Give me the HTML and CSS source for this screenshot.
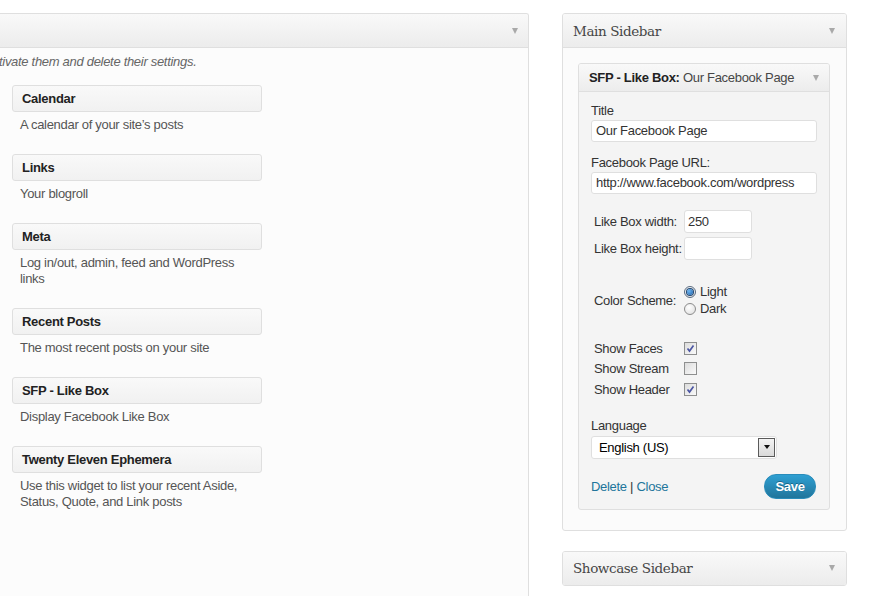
FILE: index.html
```html
<!DOCTYPE html>
<html lang="en">
<head>
<meta charset="utf-8">
<title>Widgets</title>
<link rel="stylesheet" href="styles.css">
</head>
<body>
<div class="page">
  <section class="available">
    <div class="panel-head"><span class="arrow"></span></div>
    <div class="available-body">
      <p class="hint"><span class="hint-cut"><span>Drag widgets back here to deac</span></span>tivate them and delete their settings.</p>
      <ul class="widget-list">
        <li class="widget-item"><div class="widget-top">Calendar</div><p class="widget-desc">A calendar of your site’s posts</p></li>
        <li class="widget-item"><div class="widget-top">Links</div><p class="widget-desc">Your blogroll</p></li>
        <li class="widget-item"><div class="widget-top">Meta</div><p class="widget-desc">Log in/out, admin, feed and WordPress links</p></li>
        <li class="widget-item"><div class="widget-top">Recent Posts</div><p class="widget-desc">The most recent posts on your site</p></li>
        <li class="widget-item"><div class="widget-top">SFP - Like Box</div><p class="widget-desc">Display Facebook Like Box</p></li>
        <li class="widget-item"><div class="widget-top">Twenty Eleven Ephemera</div><p class="widget-desc">Use this widget to list your recent Aside, Status, Quote, and Link posts</p></li>
      </ul>
    </div>
  </section>

  <aside class="sidebars">
    <section class="sidebar">
      <div class="panel-head"><h3 class="sidebar-title">Main Sidebar</h3><span class="arrow"></span></div>
      <div class="sidebar-body">
        <div class="widget">
          <div class="widget-head"><h4 class="widget-title"><b>SFP - Like Box:</b> Our Facebook Page</h4><span class="arrow"></span></div>
          <form class="widget-form">
            <label class="field-label first">Title</label>
            <div class="text-input">Our Facebook Page</div>
            <label class="field-label">Facebook Page URL:</label>
            <div class="text-input">http://www.facebook.com/wordpress</div>

            <div class="size-rows">
              <span class="row-label">Like Box width:</span><div class="small-input">250</div>
              <span class="row-label">Like Box height:</span><div class="small-input"></div>
            </div>

            <div class="scheme-row">
              <span class="row-label">Color Scheme:</span>
              <div class="radio-group">
                <div class="radio-line"><span class="radio checked"></span>Light</div>
                <div class="radio-line"><span class="radio"></span>Dark</div>
              </div>
            </div>

            <div class="check-rows">
              <span class="row-label">Show Faces</span><span class="checkbox checked"><svg viewBox="0 0 11 11" width="11" height="11"><path d="M2.5 5.5 L4.5 8 L8.5 2.5" fill="none" stroke="#4c56a3" stroke-width="1.7"/></svg></span>
              <span class="row-label">Show Stream</span><span class="checkbox"></span>
              <span class="row-label">Show Header</span><span class="checkbox checked"><svg viewBox="0 0 11 11" width="11" height="11"><path d="M2.5 5.5 L4.5 8 L8.5 2.5" fill="none" stroke="#4c56a3" stroke-width="1.7"/></svg></span>
            </div>

            <label class="field-label lang">Language</label>
            <div class="select">English (US)<span class="select-btn"></span></div>

            <div class="widget-actions">
              <div class="links"><a class="link">Delete</a> | <a class="link">Close</a></div>
              <span class="save">Save</span>
            </div>
          </form>
        </div>
      </div>
    </section>

    <section class="sidebar closed">
      <div class="panel-head"><h3 class="sidebar-title">Showcase Sidebar</h3><span class="arrow"></span></div>
    </section>
  </aside>
</div>
</body>
</html>
```

FILE: styles.css
```css
* { box-sizing: border-box; }
html, body { margin: 0; background: #fff; }
body {
  font-family: "Liberation Sans", Arial, sans-serif;
  font-size: 13px;
  letter-spacing: -0.3px;
  color: #333;
  height: 596px;
  overflow: hidden;
}
.page {
  display: flex;
  align-items: flex-start;
  gap: 33px;
  padding-top: 13px;
}

/* shared header */
.panel-head {
  height: 34px;
  border-bottom: 1px solid #dfdfdf;
  background: linear-gradient(#f9f9f9, #ececec);
  display: flex;
  align-items: center;
  justify-content: flex-end;
  padding: 0 10px 0 10px;
}
.arrow {
  width: 0; height: 0;
  border-left: 3.5px solid transparent;
  border-right: 3.5px solid transparent;
  border-top: 6px solid #a9a9a9;
  flex: none;
}

/* available widgets */
.available {
  width: 529px;
  height: 600px;
  border: 1px solid #dfdfdf;
  border-left: 0;
  border-bottom: 0;
  border-radius: 0 3px 0 0;
  background: #fcfcfc;
  overflow: hidden;
}
.hint {
  margin: 6px 0 15px -1px;
  line-height: 16px;
  font-style: italic;
  color: #666;
  display: flex;
  white-space: nowrap;
}
.hint-cut {
  width: 0;
  display: flex;
  justify-content: flex-end;
}
.widget-list {
  list-style: none;
  margin: 0;
  padding: 0 0 0 12px;
}
.widget-top {
  width: 250px;
  height: 27px;
  border: 1px solid #dfdfdf;
  border-radius: 3px;
  background: linear-gradient(#f9f9f9, #f1f1f1);
  font-weight: bold;
  color: #222;
  line-height: 25px;
  padding-left: 9px;
}
.widget-desc {
  width: 250px;
  margin: 5px 0 21px;
  padding: 0 8px;
  line-height: 16px;
  color: #555;
}

/* sidebars */
.sidebars {
  width: 285px;
  display: flex;
  flex-direction: column;
  gap: 20px;
}
.sidebar {
  border: 1px solid #dfdfdf;
  border-radius: 3px;
  background: #fbfbfb;
  overflow: hidden;
}
.sidebar .panel-head {
  justify-content: space-between;
  padding: 0 11px 0 10px;
}
.sidebar.closed .panel-head {
  height: 33px;
  border-bottom: 0;
}
.sidebar-title {
  margin: 0;
  font-family: "DejaVu Serif", Georgia, serif;
  font-weight: normal;
  font-size: 13.5px;
  letter-spacing: -0.4px;
  color: #464646;
}
.sidebar-body {
  padding: 15px 16px 20px 15px;
}

.widget {
  border: 1px solid #dfdfdf;
  border-radius: 3px;
  background: #f4f4f4;
  overflow: hidden;
}
.widget-head {
  height: 28px;
  border-bottom: 1px solid #dfdfdf;
  background: linear-gradient(#f9f9f9, #ececec);
  display: flex;
  align-items: center;
  justify-content: space-between;
  padding: 0 10px 0 10px;
}
.widget-title {
  margin: 0;
  font-size: 13px;
  font-weight: normal;
  color: #464646;
}
.widget-title b { color: #222; }

.widget-form {
  padding: 11px 12px 10px;
  display: flex;
  flex-direction: column;
}
.field-label {
  display: block;
  line-height: 16px;
  margin-top: 13px;
}
.field-label.first { margin-top: 0; }
.text-input {
  margin-top: 1px;
  height: 22px;
  border: 1px solid #dfdfdf;
  border-radius: 3px;
  background: #fff;
  line-height: 20px;
  padding: 0 4px;
  color: #333;
}

.size-rows {
  margin-top: 16px;
  display: grid;
  grid-template-columns: 93px 68px;
  row-gap: 4px;
  align-items: center;
}
.row-label { padding-left: 3px; white-space: nowrap; }
.small-input {
  height: 23px;
  border: 1px solid #dfdfdf;
  border-radius: 3px;
  background: #fff;
  line-height: 21px;
  padding: 0 3px;
}

.scheme-row {
  margin-top: 23px;
  display: grid;
  grid-template-columns: 93px auto;
  align-items: center;
}
.scheme-row .row-label { padding-top: 1px; }
.radio-line {
  display: flex;
  align-items: center;
  line-height: 17px;
}
.radio {
  width: 12px; height: 12px;
  border-radius: 50%;
  border: 1px solid #8c8c8c;
  background: radial-gradient(circle at 40% 35%, #fff, #dcdcdc);
  margin-right: 4px;
  display: flex;
  align-items: center;
  justify-content: center;
}
.radio.checked {
  border-color: #5a6b80;
}
.radio.checked::after {
  content: "";
  width: 6px; height: 6px;
  border-radius: 50%;
  background: radial-gradient(circle at 35% 35%, #6fb6f0, #1b5ea8);
  box-shadow: 0 0 0 1px #204670;
}

.check-rows {
  margin-top: 21px;
  display: grid;
  grid-template-columns: 93px 13px;
  grid-auto-rows: 20.5px;
  align-items: center;
}
.checkbox {
  width: 13px; height: 13px;
  border: 1px solid #8e8f8f;
  background: linear-gradient(135deg, #dcdcdc, #fafafa);
  display: flex;
  align-items: center;
  justify-content: center;
}

.field-label.lang { margin-top: 18px; }
.select {
  margin-top: 2px;
  width: 186px;
  height: 23px;
  border: 1px solid #dfdfdf;
  border-radius: 3px;
  background: #fff;
  color: #000;
  line-height: 21px;
  padding-left: 7px;
  position: relative;
}
.select-btn {
  position: absolute;
  right: 1px;
  top: 1px;
  width: 17px;
  height: 19px;
  border: 1px solid #5a5a5a;
  background: linear-gradient(#f4f4f4, #d9d9d9);
  display: flex;
  align-items: center;
  justify-content: center;
}
.select-btn::after {
  content: "";
  border-left: 3.5px solid transparent;
  border-right: 3.5px solid transparent;
  border-top: 4px solid #111;
}

.widget-actions {
  margin-top: 15px;
  height: 25px;
  display: flex;
  align-items: center;
  justify-content: space-between;
}
.links { color: #333; }
.link { color: #21759b; text-decoration: none; }
.save {
  width: 52px;
  height: 25px;
  margin-right: 1px;
  border-radius: 12px;
  border: 1px solid #298cba;
  background: linear-gradient(#2e9fd2, #21759b);
  color: #fff;
  font-weight: bold;
  text-align: center;
  line-height: 23px;
  text-shadow: 0 -1px 0 rgba(0,0,0,0.3);
}
```
